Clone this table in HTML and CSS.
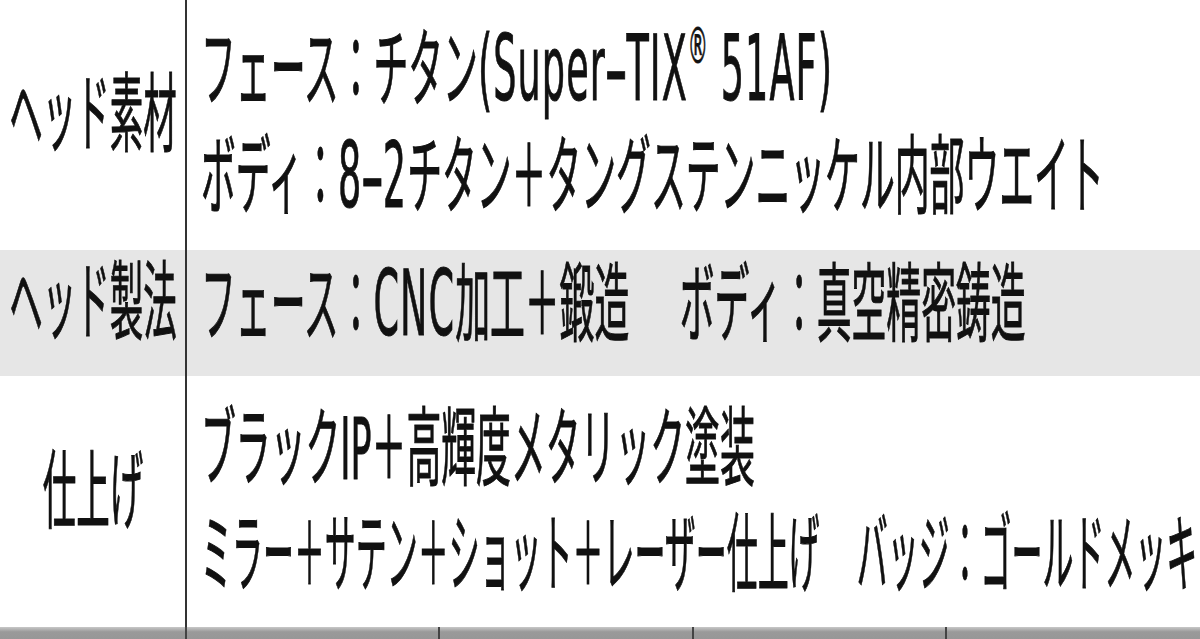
FILE: index.html
```html
<!DOCTYPE html>
<html lang="ja">
<head>
<meta charset="utf-8">
<title>スペック</title>
<link rel="stylesheet" href="styles.css">
</head>
<body>
<div class="spec">
  <div class="row">
    <div class="label"><span class="squeeze center">ヘッド素材</span></div>
    <div class="value">
      <span class="squeeze">フェース：チタン<span class="lat">(Super<span class="dash">-</span>TIX<sup>®</sup> 51AF)</span></span>
      <span class="squeeze">ボディ：<span class="lat">8<span class="dash">-</span>2</span>チタン＋タングステンニッケル内部ウエイト</span>
    </div>
  </div>
  <div class="row shaded">
    <div class="label"><span class="squeeze center">ヘッド製法</span></div>
    <div class="value">
      <span class="squeeze">フェース：<span class="lat">CNC</span>加工＋鍛造<span class="gap">　</span>ボディ：真空精密鋳造</span>
    </div>
  </div>
  <div class="row tall">
    <div class="label"><span class="squeeze center">仕上げ</span></div>
    <div class="value">
      <span class="squeeze">ブラックIP＋高輝度メタリック塗装</span>
      <span class="squeeze narrow">ミラー＋サテン＋ショット＋レーザー仕上げ<span class="gap small">　</span>バッジ：ゴールドメッキ</span>
    </div>
  </div>
  <div class="head-row">
    <div class="head-cell"></div>
    <div class="head-cell"></div>
    <div class="head-cell"></div>
    <div class="head-cell"></div>
    <div class="head-cell"></div>
  </div>
</div>
</body>
</html>
```
FILE: styles.css
```css
html, body {
  margin: 0;
  padding: 0;
  background: #ffffff;
  overflow: hidden;
}

.spec {
  width: 1200px;
  height: 639px;
  overflow: hidden;
  font-family: "DejaVu Sans", "Noto Sans CJK JP", sans-serif;
  font-size: 86px;
  font-weight: 400;
  line-height: 106px;
  color: #111111;
}

.row {
  display: grid;
  grid-template-columns: 187px minmax(0, 1fr);
  height: 248px;
  margin-bottom: 2px;
}

.row.shaded {
  background: #e6e6e6;
  height: 126px;
  margin-bottom: 0;
}

.row.tall {
  height: 251px;
  margin-bottom: 0;
}

.label {
  border-right: 2px solid #333333;
  display: flex;
  justify-content: center;
  align-items: center;
  overflow: hidden;
  margin-bottom: -2px;
  padding-bottom: 20px;
}

.row.shaded .label,
.row.tall .label {
  margin-bottom: 0;
}

.value {
  display: flex;
  flex-direction: column;
  justify-content: center;
  align-items: flex-start;
  padding-left: 14px;
  padding-bottom: 2px;
  overflow: hidden;
}

.row.shaded .value {
  padding-bottom: 18px;
}

.row.tall .value {
  padding-bottom: 0;
}

.squeeze {
  display: inline-block;
  white-space: nowrap;
  transform: scaleX(0.405);
  transform-origin: left center;
  -webkit-text-stroke: 1px #111111;
}

.squeeze.center {
  transform: scaleX(0.39);
  transform-origin: center center;
}

.squeeze.narrow {
  transform: scaleX(0.36);
}

.lat {
  font-size: 1.05em;
  letter-spacing: 0.03em;
}

.dash {
  display: inline-block;
  padding: 0 0.1em;
  transform: scaleX(1.8);
  transform-origin: center center;
  letter-spacing: 0;
}

.gap {
  padding-right: 0.45em;
}

.gap.small {
  padding-right: 0.2em;
}

sup {
  font-size: 0.55em;
  line-height: 0;
  vertical-align: 0.75em;
  letter-spacing: 0;
}

.head-row {
  display: grid;
  grid-template-columns: 187px 253px 254px 253px minmax(0, 1fr);
  height: 12px;
  background: linear-gradient(#c8c8c8, #9a9a9a 40%, #979797);
}

.head-cell {
  border-right: 2px solid #444444;
}

.head-cell:last-child {
  border-right: 0;
}
```
